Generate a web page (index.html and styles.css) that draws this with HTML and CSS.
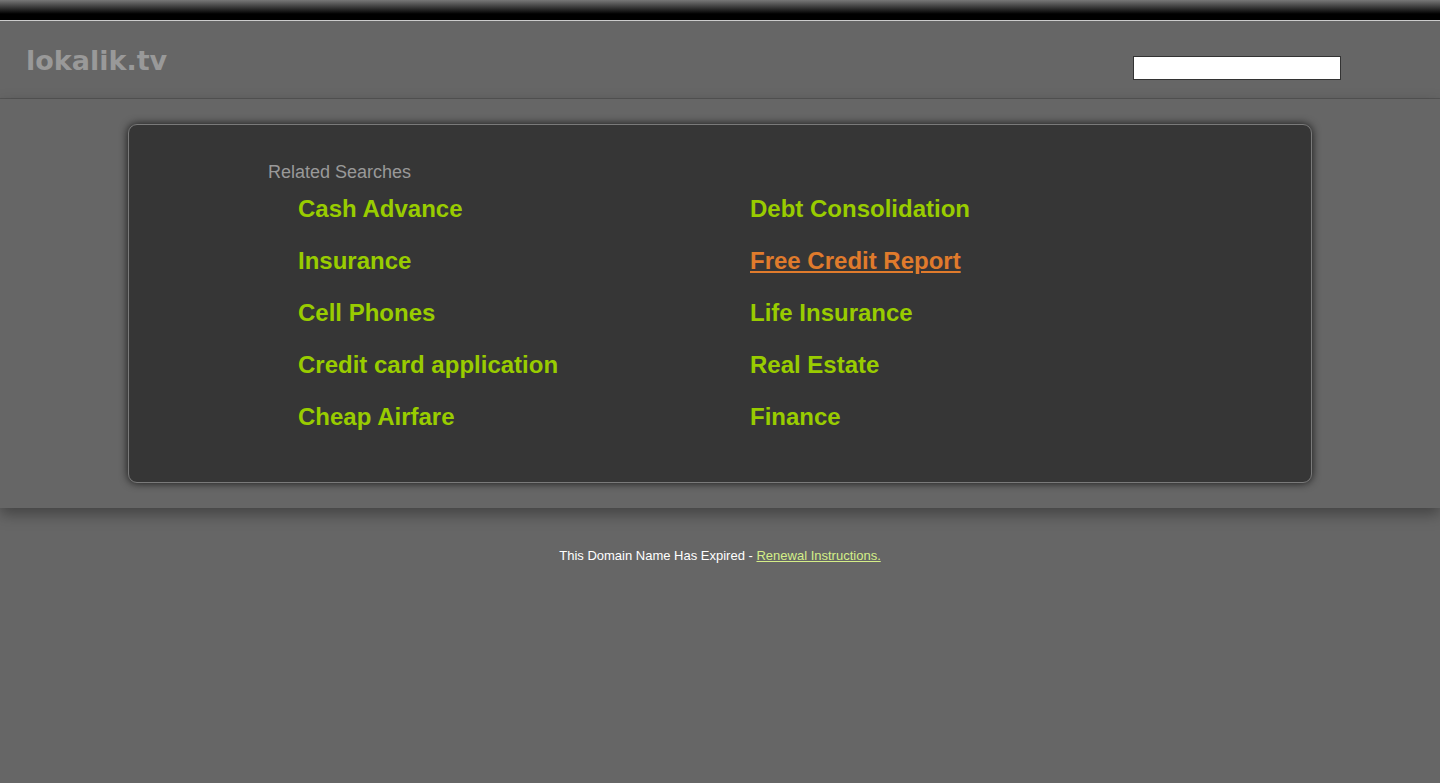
FILE: index.html
```html
<!DOCTYPE html>
<html lang="en">
<head>
  <meta charset="UTF-8">
  <title>lokalik.tv</title>
  <link rel="stylesheet" href="styles.css">
</head>
<body>
  <div class="topbar"></div>
  <div class="header">
    <div class="logo">lokalik.tv</div>
    <form class="search"><input type="text" class="search-box"></form>
  </div>

  <div class="main">
    <div class="card">
      <div class="title">Related Searches</div>
      <ul class="links">
        <li><a href="#">Cash Advance</a></li>
        <li><a href="#">Debt Consolidation</a></li>
        <li><a href="#">Insurance</a></li>
        <li><a href="#" class="hover">Free Credit Report</a></li>
        <li><a href="#">Cell Phones</a></li>
        <li><a href="#">Life Insurance</a></li>
        <li><a href="#">Credit card application</a></li>
        <li><a href="#">Real Estate</a></li>
        <li><a href="#">Cheap Airfare</a></li>
        <li><a href="#">Finance</a></li>
      </ul>
    </div>
  </div>

  <div class="footer">This Domain Name Has Expired - <a href="#">Renewal Instructions.</a></div>
</body>
</html>
```

FILE: styles.css
```css
* { box-sizing: border-box; }
body { margin: 0; background: #666; font-family: "Liberation Sans", Arial, sans-serif; }

.topbar { height: 21px; background: linear-gradient(#777, #000 70%); border-bottom: 1px solid #ccc; }
.header {
  height: 78px;
  display: flex;
  align-items: center;
  justify-content: space-between;
  padding: 0 99px 0 26px;
  border-bottom: 1px solid #555;
}
.logo { font-family: "DejaVu Sans", Verdana, sans-serif; font-weight: bold; font-size: 27px; color: #999; margin-top: 1px; }
.search { margin: 16px 0 0; }
.search-box { width: 208px; height: 24px; border: 1px solid #333; background: #fff; padding: 0; margin: 0; display: block; }

.main { padding: 25px 0; box-shadow: 0 6px 14px rgba(0, 0, 0, 0.35); position: relative; }
.card {
  width: 1184px;
  margin: 0 auto;
  padding: 36px 0 39px 139px;
  background: #363636;
  border: 1px solid #7a7a7a;
  border-radius: 9px;
  box-shadow: 0 0 8px rgba(0, 0, 0, 0.8);
}
.title { font-size: 18px; color: #999; line-height: 22px; }
.links { list-style: none; margin: 0; padding: 0 0 0 30px; display: grid; grid-template-columns: 452px 452px; }
.links li { line-height: 52px; font-size: 24px; font-weight: bold; }
.links a { color: #99cc00; text-decoration: none; }
.links a.hover { color: #e07b2c; text-decoration: underline; }

.footer { text-align: center; color: #fff; font-size: 13px; padding-top: 40px; }
.footer a { color: #d4ee88; }
```
